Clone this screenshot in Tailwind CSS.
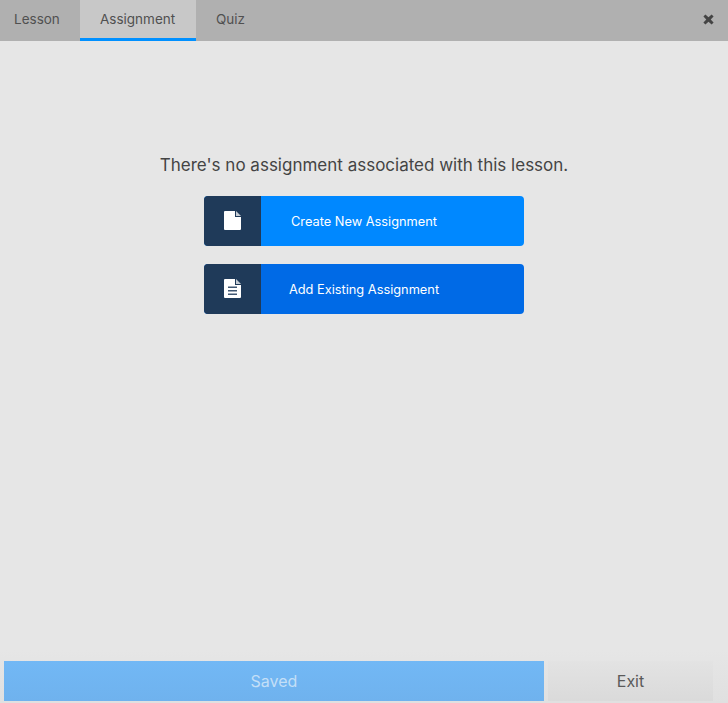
<!DOCTYPE html>
<html lang="en">
<head>
  <meta charset="UTF-8">
  <meta name="viewport" content="width=device-width, initial-scale=1">
  <title>Lesson Assignment</title>
  <script src="https://cdn.jsdelivr.net/npm/@tailwindcss/browser@4"></script>
</head>
<body class="bg-[#e6e6e6] h-[703px] w-[728px] overflow-hidden flex flex-col font-['Inter',sans-serif] text-[#444]">

  <!-- tabs -->
  <header class="h-[41px] bg-[#b0b0b0] flex items-stretch justify-between">
    <nav class="flex text-[13.5px] leading-[20px] text-[#505050]">
      <a class="w-[80px] pl-[14px] pt-[9px]">Lesson</a>
      <a class="w-[116px] pl-[20px] pt-[9px] bg-[#c8c8c8] border-b-[3px] border-[#0090ff]">Assignment</a>
      <a class="pl-[20px] pt-[9px]">Quiz</a>
    </nav>
    <button class="pr-[14px] pb-[3px] flex items-center">
      <svg class="w-[11px] h-[11px]" viewBox="0 0 11 11" fill="#444">
        <path d="M2.400.4 5.500 3.300 8.600.4 10.600 2.400 7.700 5.500 10.600 8.600 8.600 10.600 5.500 7.700 2.400 10.600.4 8.600 3.300 5.500.4 2.400Z"/>
      </svg>
    </button>
  </header>

  <!-- empty state -->
  <main class="flex-1 flex flex-col items-center pt-[113px]">
    <p class="text-[17px] leading-[22px] text-[#444] mb-[20px]">There's no assignment associated with this lesson.</p>
    <button class="w-[320px] h-[50px] rounded-[4px] overflow-hidden flex mb-[18px] bg-[#0088ff]">
      <span class="w-[57px] h-full bg-[#1f3a59] flex items-center justify-center pb-[1px]">
        <svg class="w-[17px] h-[19px]" viewBox="0 0 17 19">
          <path fill="#fff" d="M1 0H11V6H17V18a1 1 0 0 1-1 1H1a1 1 0 0 1-1-1V1a1 1 0 0 1 1-1Z"/>
          <path fill="#fff" fill-opacity=".75" d="M12 0 17 5H12Z"/>
        </svg>
      </span>
      <span class="flex-1 h-full flex items-center justify-center text-[12.8px] text-white pr-[57px] pt-[2px]">Create New Assignment</span>
    </button>
    <button class="w-[320px] h-[50px] rounded-[4px] overflow-hidden flex bg-[#006ae6]">
      <span class="w-[57px] h-full bg-[#1f3a59] flex items-center justify-center pb-[1px]">
        <svg class="w-[17px] h-[19px]" viewBox="0 0 17 19">
          <path fill="#fff" d="M1 0H11V6H17V18a1 1 0 0 1-1 1H1a1 1 0 0 1-1-1V1a1 1 0 0 1 1-1Z"/>
          <path fill="#fff" fill-opacity=".75" d="M12 0 17 5H12Z"/>
          <path fill="#1f3a59" fill-opacity=".85" d="M4 7.500H13V9.100H4ZM4 11H13V12.600H4ZM4 14.500H13V16.100H4Z"/>
        </svg>
      </span>
      <span class="flex-1 h-full flex items-center justify-center text-[12.8px] text-white pr-[57px] pt-[2px]">Add Existing Assignment</span>
    </button>
  </main>

  <!-- footer -->
  <footer class="h-[53px] pt-[11px] pl-[4px] flex gap-[4px] bg-gradient-to-b from-[#e6e6e6] to-[#e0e0e0]">
    <button class="w-[540px] h-[40px] bg-gradient-to-b from-[#72b8f5] to-[#6fb2ee] text-[#c3dff7] text-base">Saved</button>
    <button class="w-[165px] h-[40px] bg-gradient-to-b from-[#e3e3e3] to-[#dadada] text-[#5a5a5a] text-base">Exit</button>
  </footer>

</body>
</html>
